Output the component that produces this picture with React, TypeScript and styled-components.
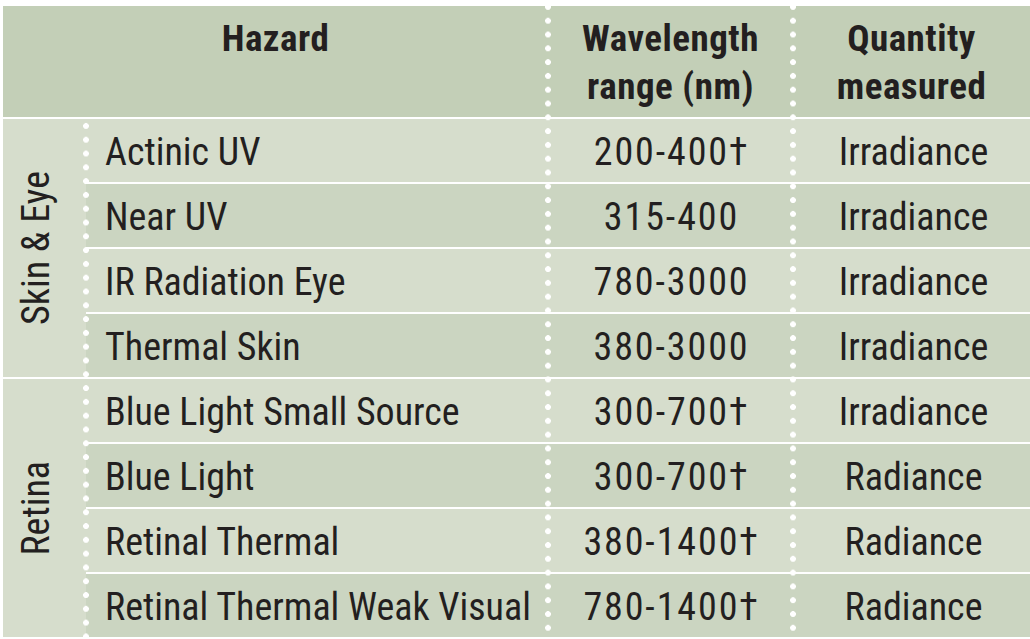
import React from "react";
import styled, { createGlobalStyle, css } from "styled-components";

const Global = createGlobalStyle`
  html, body { margin: 0; padding: 0; background: #ffffff; }
  body { font-family: "Roboto Condensed", "Liberation Sans Narrow", "Arial Narrow", "DejaVu Sans Condensed", sans-serif; font-stretch: condensed; color: #231f20; }
`;

const HEADER_BG = "#c3cfb7";
const LIGHT_BG = "#d6ddcc";
const DARK_BG = "#cbd5c1";

const dots = css`
  background-image: radial-gradient(circle at 3px 7px, #ffffff 2.6px, rgba(255,255,255,0) 3.2px);
  background-size: 6px 13.8px;
  background-repeat: repeat-y;
`;

const Table = styled.div`
  position: relative;
  width: 1030px;
  height: 639px;
  box-sizing: border-box;
  padding: 6px 0 0 3px;
  display: flex;
  flex-direction: column;
  gap: 2px;
  overflow: hidden;
`;

const ColumnDots = styled.div<{ $x: number }>`
  position: absolute;
  top: 0;
  bottom: 0;
  left: ${(p) => p.$x - 3}px;
  width: 6px;
  ${dots};
  pointer-events: none;
`;

const HeaderRow = styled.div`
  display: grid;
  grid-template-columns: 545px 245px 1fr;
  height: 111px;
  background: ${HEADER_BG};
`;

const HeaderCell = styled.div`
  box-sizing: border-box;
  padding-top: 9px;
  text-align: center;
  font-weight: 700;
  font-size: 37px;
  line-height: 48px;
  letter-spacing: 0.5px;
`;

const Body = styled.div`
  position: relative;
  display: flex;
  flex-direction: column;
  gap: 2px;
  &::before {
    content: "";
    position: absolute;
    top: 0;
    bottom: 0;
    left: 80px;
    width: 6px;
    ${dots};
    z-index: 1;
  }
`;

const Group = styled.div`
  display: flex;
  background: ${LIGHT_BG};
`;

const GroupLabel = styled.div`
  width: 83px;
  flex: none;
  display: flex;
  align-items: center;
  justify-content: center;
  font-size: 38px;
  line-height: 1;
  span {
    writing-mode: vertical-rl;
    transform: rotate(180deg);
    white-space: nowrap;
    margin-right: 18px;
  }
`;

const Rows = styled.div`
  flex: 1;
  display: flex;
  flex-direction: column;
  gap: 2px;
  background: #ffffff;
`;

const Row = styled.div<{ $dark: boolean }>`
  display: grid;
  grid-template-columns: 462px 245px 1fr;
  height: 63px;
  box-sizing: border-box;
  padding-top: 3px;
  background: ${(p) => (p.$dark ? DARK_BG : LIGHT_BG)};
  font-size: 38px;
  line-height: 60px;
  white-space: nowrap;
`;

const HazardCell = styled.div`
  padding-left: 19px;
`;

const RangeCell = styled.div`
  text-align: center;
  letter-spacing: 1.9px;
  padding-left: 2px;
`;

const QuantityCell = styled.div`
  text-align: center;
  padding-left: 4px;
`;

const groups = [
  {
    label: "Skin & Eye",
    rows: [
      ["Actinic UV", "200-400†", "Irradiance"],
      ["Near UV", "315-400", "Irradiance"],
      ["IR Radiation Eye", "780-3000", "Irradiance"],
      ["Thermal Skin", "380-3000", "Irradiance"],
    ],
  },
  {
    label: "Retina",
    rows: [
      ["Blue Light Small Source", "300-700†", "Irradiance"],
      ["Blue Light", "300-700†", "Radiance"],
      ["Retinal Thermal", "380-1400†", "Radiance"],
      ["Retinal Thermal Weak Visual", "780-1400†", "Radiance"],
    ],
  },
];

export default function App() {
  return (
    <>
      <Global />
      <Table>
        <HeaderRow>
          <HeaderCell>Hazard</HeaderCell>
          <HeaderCell>
            Wavelength
            <br />
            range (nm)
          </HeaderCell>
          <HeaderCell>
            Quantity
            <br />
            measured
          </HeaderCell>
        </HeaderRow>
        <Body>
          {groups.map((g) => (
            <Group key={g.label}>
              <GroupLabel>
                <span>{g.label}</span>
              </GroupLabel>
              <Rows>
                {g.rows.map((r, i) => (
                  <Row key={r[0]} $dark={i % 2 === 1}>
                    <HazardCell>{r[0]}</HazardCell>
                    <RangeCell>{r[1]}</RangeCell>
                    <QuantityCell>{r[2]}</QuantityCell>
                  </Row>
                ))}
              </Rows>
            </Group>
          ))}
        </Body>
        <ColumnDots $x={548} />
        <ColumnDots $x={793} />
      </Table>
    </>
  );
}
